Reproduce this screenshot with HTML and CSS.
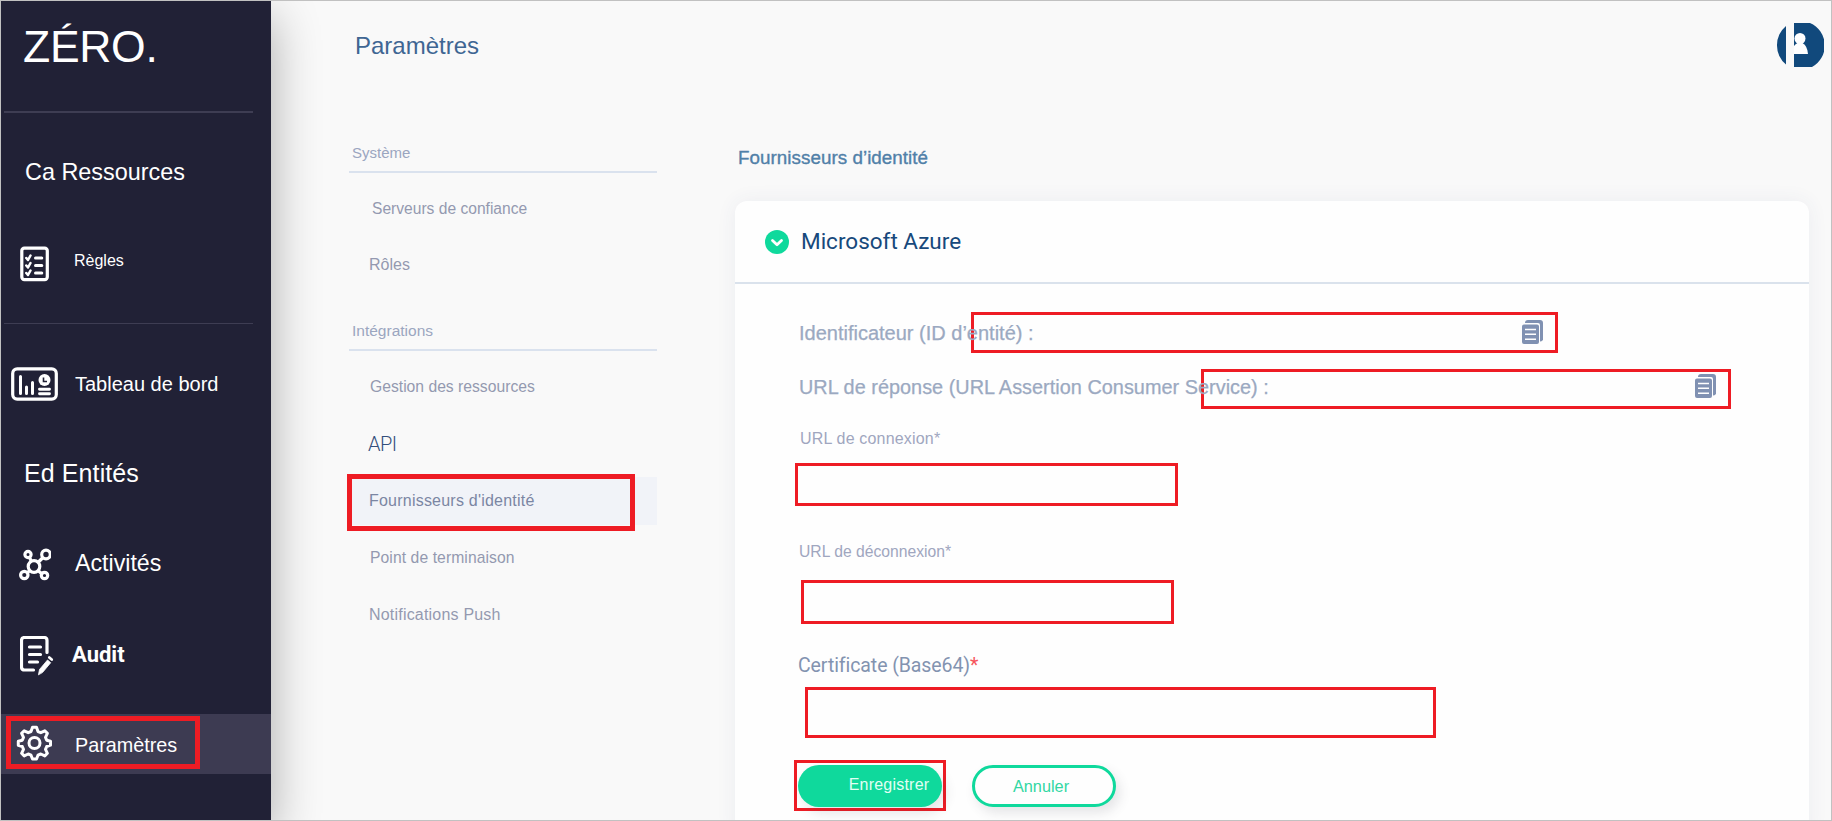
FILE: index.html
```html
<!DOCTYPE html>
<html lang="fr">
<head>
<meta charset="utf-8">
<title>Paramètres</title>
<link rel="stylesheet" href="styles.css">
</head>
<body>
<div class="app">
  <aside class="sidebar">
    <div class="logo">ZÉRO.</div>
    <div class="divider divider-top"></div>
    <div class="nav-item nav-resources"><span class="label">Ca Ressources</span></div>
    <div class="nav-item nav-rules">
      <svg class="icon" width="30" height="36" viewBox="0 0 30 36" fill="none" stroke="#fff" stroke-linecap="round" stroke-linejoin="round"><rect x="1.800" y="2.200" width="25.500" height="31.500" rx="2.600" stroke-width="3.200"/><path d="M6.300 12l1.700 2L10.500 9.500M6.300 19.500l1.700 2L10.500 17M6.300 27l1.700 2L10.500 24.500" stroke-width="2.500"/><path d="M15.500 12h6.300M15.500 19.500h6.300M15.500 27h6.300" stroke-width="3"/></svg>
      <span class="label">Règles</span>
    </div>
    <div class="divider divider-mid"></div>
    <div class="nav-item nav-dashboard">
      <svg class="icon" width="47" height="34" viewBox="0 0 47 34" fill="none" stroke="#fff"><rect x="1.700" y="1.900" width="43.600" height="30.200" rx="4.500" stroke-width="3.200"/><path d="M9.500 9.500v17M15.500 20v6.500M21.500 15.500v11" stroke-width="3" stroke-linecap="round"/><path d="M28.500 22.300h10M28.500 26.700h10" stroke-width="2.900" stroke-linecap="round"/><circle cx="33.500" cy="13" r="6" fill="#fff" stroke="none"/><path d="M32.500 10.500v4h3.500" stroke="#212136" stroke-width="1.600"/></svg>
      <span class="label">Tableau de bord</span>
    </div>
    <div class="nav-item nav-entities"><span class="label">Ed Entités</span></div>
    <div class="nav-item nav-activities">
      <svg class="icon" width="34" height="34" viewBox="0 0 34 34" fill="none" stroke="#fff" stroke-width="3.200"><circle cx="17" cy="18.500" r="5.800"/><circle cx="11" cy="6.500" r="3.100"/><circle cx="29" cy="6.500" r="4.300"/><circle cx="7.300" cy="27" r="3.700"/><circle cx="27.500" cy="27.500" r="3.200"/><path d="M12.500 9.500l2 4M25.500 10l-4 4M13 22.500l-2.500 2M21 22.500l3.500 3"/></svg>
      <span class="label">Activités</span>
    </div>
    <div class="nav-item nav-audit">
      <svg class="icon" width="34" height="40" viewBox="0 0 34 40" fill="none" stroke="#fff" stroke-linecap="round" stroke-linejoin="round"><path d="M13.500 34H4.500q-3 0-3-3V4.500q0-3 3-3h19.500q3 0 3 3v12" stroke-width="3.200"/><path d="M9.500 11h11M9.500 18.500h11M9.500 26h8" stroke-width="3.200"/><path d="M18.500 38.500l1-5 8-9.500 3.200 2.700-8 9.600z" fill="#fff" stroke-width=".8"/><path d="M29.300 21.500l2.400 2" stroke-width="2.800"/></svg>
      <span class="label">Audit</span>
    </div>
    <div class="nav-item nav-settings active">
      <svg class="icon" width="36" height="36" viewBox="0 0 36 36" fill="none" stroke="#fff" stroke-width="3" stroke-linejoin="round"><circle cx="18.500" cy="18" r="5.500"/><path d="M15 6.500L16.500 2.200h4L22 6.500l2.800 1.200L28.800 5.800l2.600 2.600-1.900 4 1.200 2.800L34.500 16.200v4L30.700 21.500l-1.200 2.800 1.900 4-2.600 2.600-4-1.900L22 30.200 20.500 34h-4L15 30.200l-2.800-1.200-4 1.900-2.600-2.600 1.900-4-1.200-2.800L2.300 20.200v-4L6.300 15.200l1.200-2.800-1.900-4 2.600-2.600 4 1.900z"/></svg>
      <span class="label">Paramètres</span>
      <div class="mark mark-nav"></div>
    </div>
  </aside>

  <nav class="subnav">
    <h1 class="page-title">Paramètres</h1>
    <h2 class="group group-system">Système</h2>
    <a class="sub sub-servers">Serveurs de confiance</a>
    <a class="sub sub-roles">Rôles</a>
    <h2 class="group group-integrations">Intégrations</h2>
    <a class="sub sub-resources">Gestion des ressources</a>
    <a class="sub sub-api">API</a>
    <a class="sub sub-identity">Fournisseurs d'identité<span class="mark mark-identity"></span></a>
    <a class="sub sub-endpoint">Point de terminaison</a>
    <a class="sub sub-push">Notifications Push</a>
  </nav>

  <main class="main">
    <header class="topbar">
      <svg class="avatar" width="48" height="44" viewBox="0 0 48 44"><path fill="#11497c" d="M10 3A25 25 0 0 0 10 41.500zM18 0H34A24.500 24.500 0 0 1 36 44H18z"/><circle cx="24" cy="15.500" r="5.500" fill="#fff"/><path fill="#fff" d="M18 31V23q1.500-2 3.500-3h5Q31.500 23 32 31z"/></svg>
    </header>
    <h2 class="section-title">Fournisseurs d’identité</h2>
    <section class="card">
      <div class="card-head">
        <svg class="check" width="24" height="24" viewBox="0 0 24 24"><circle cx="12" cy="12" r="12" fill="#0fd99c"/><path d="M7.500 10.500l4.500 4.300 4.500-4.300" fill="none" stroke="#fff" stroke-width="2.800" stroke-linecap="round" stroke-linejoin="round"/></svg>
        <span class="card-title">Microsoft Azure</span>
      </div>
      <div class="card-body">
        <div class="copy-row row-id">
          <span class="copy-label">Identificateur (ID d’entité) :</span>
          <div class="mark mark-id"><svg class="copy" width="21" height="24" viewBox="0 0 21 24"><path fill="#8091b2" d="M3 3Q3 0 6 0H18Q21 0 21 3V20Q19.500 21.500 18 21.500V5Q18 3 16 3H3zM2 4.500H15Q17 4.500 17 6.500V22Q17 24 15 24H2Q0 24 0 22V6.500Q0 4.500 2 4.500z"/><path stroke="#fff" stroke-width="1.400" d="M3 9.500h11M3 14.300h11M3 19.200h11"/></svg></div>
        </div>
        <div class="copy-row row-reply">
          <span class="copy-label">URL de réponse (URL Assertion Consumer Service) :</span>
          <div class="mark mark-reply"><svg class="copy" width="21" height="24" viewBox="0 0 21 24"><path fill="#8091b2" d="M3 3Q3 0 6 0H18Q21 0 21 3V20Q19.500 21.500 18 21.500V5Q18 3 16 3H3zM2 4.500H15Q17 4.500 17 6.500V22Q17 24 15 24H2Q0 24 0 22V6.500Q0 4.500 2 4.500z"/><path stroke="#fff" stroke-width="1.400" d="M3 9.500h11M3 14.300h11M3 19.200h11"/></svg></div>
        </div>
        <label class="field-label login-label">URL de connexion*</label>
        <div class="field login-field"></div>
        <label class="field-label logout-label">URL de déconnexion*</label>
        <div class="field logout-field"></div>
        <label class="cert-label">Certificate (Base64)<span class="required">*</span></label>
        <div class="field cert-field"></div>
        <div class="actions">
          <div class="save-frame"><button class="btn save">Enregistrer</button></div>
          <button class="btn cancel">Annuler</button>
        </div>
      </div>
    </section>
  </main>
</div>
</body>
</html>
```
FILE: styles.css
```css
* { box-sizing: border-box; }
body { margin: 0; font-family: "Liberation Sans", Arial, sans-serif; background: #f9f9f9; }
h1, h2 { margin: 0; font-weight: 400; }
.app { display: flex; width: 1832px; height: 821px; border: 1px solid #c1c1c1; overflow: hidden; background: #f9f9f9; }

.sidebar { position: relative; flex: none; width: 270px; display: flex; flex-direction: column; background: #212136; color: #fff; box-shadow: 0 16px 46px rgba(0, 0, 0, .32); white-space: nowrap; }
.logo { margin: 21px 0 0 22px; height: 50px; line-height: 49px; font-size: 44.5px; letter-spacing: -.3px; }
.divider { width: 249px; margin-left: 3px; background: #3e3d53; }
.divider-top { margin-top: 39px; height: 2px; }
.divider-mid { margin-top: 42px; height: 1px; }
.nav-item { position: relative; display: flex; align-items: center; height: 40px; }
.icon { flex: none; }
.nav-resources { margin-top: 39px; padding-left: 24px; font-size: 23.4px; }
.nav-rules { margin-top: 49px; padding-left: 19px; gap: 24px; font-size: 16px; }
.nav-rules .icon { margin-top: 5px; }
.nav-dashboard { margin-top: 40px; padding-left: 10px; gap: 17px; font-size: 20px; }
.nav-entities { margin-top: 49px; padding-left: 23px; font-size: 25px; letter-spacing: .1px; }
.nav-entities .label { padding-top: 1px; }
.nav-activities { margin-top: 50px; padding-left: 16px; gap: 24px; font-size: 23.2px; }
.nav-activities .icon { margin-top: 3px; }
.nav-audit { margin-top: 50px; padding-left: 19px; gap: 18px; font: 700 22px Roboto, sans-serif; }
.nav-audit .icon { margin-top: 5px; }
.nav-audit .label { padding-top: 2px; }
.nav-settings { margin-top: 41px; padding-left: 15px; gap: 23px; height: 60px; font-size: 19.8px; }
.nav-settings .label { padding-top: 2px; }
.nav-settings .icon { margin-top: -2px; }
.active { background: #3d3b52; }
.mark { position: absolute; display: flex; justify-content: flex-end; border: 3px solid #ee1c24; }
.mark-nav { left: 5px; top: 2px; width: 194px; height: 53px; border-width: 5px; }

.subnav { flex: none; width: 308px; margin-left: 78px; display: flex; flex-direction: column; white-space: nowrap; }
.page-title { margin: 25px 0 0 6px; height: 40px; line-height: 40px; font-size: 24px; color: #3f6693; }
.group { padding-left: 3px; height: 39px; line-height: 38px; font-size: 15px; color: #9ba6c0; border-bottom: 2px solid #dae2ee; }
.group-system { margin-top: 68px; }
.group-integrations { margin-top: 27px; font-size: 15.5px; }
.sub { position: relative; height: 40px; line-height: 40px; padding-left: 21px; font-size: 15.7px; color: #9499b0; }
.sub-servers { margin-top: 16px; padding-left: 23px; font-size: 15.6px; }
.sub-roles { margin-top: 16px; padding-left: 20px; font-size: 16px; }
.sub-resources { margin-top: 16px; }
.sub-api { margin-top: 17px; padding-left: 19px; font: 300 20px/40px Roboto, sans-serif; color: #334e7b; letter-spacing: -.5px; }
.sub-identity { margin-top: 13px; height: 48px; line-height: 47px; padding-left: 20px; font-size: 16px; letter-spacing: .22px; color: #7b86a3; background: #f1f3f8; }
.mark-identity { left: -2px; top: -3px; width: 288px; height: 57px; border-width: 5px; }
.sub-endpoint { margin-top: 13px; letter-spacing: .08px; }
.sub-push { margin-top: 17px; padding-left: 20px; font-size: 16px; letter-spacing: .2px; }

.main { flex: none; width: 1174px; margin-left: 78px; }
.topbar { display: flex; justify-content: flex-end; height: 137px; padding: 22px 7px 0 0; width: 1096px; }
.avatar { flex: none; }
.section-title { height: 40px; line-height: 40px; padding-left: 3px; font-size: 18.8px; letter-spacing: .05px; color: #5080a8; -webkit-text-stroke: .35px #5080a8; }
.card { width: 1074px; height: 640px; margin-top: 23px; border-radius: 12px; background: #fefefe; box-shadow: 0 0 20px rgba(50, 70, 130, .07); }
.card-head { display: flex; align-items: center; gap: 12px; height: 83px; padding-left: 30px; border-bottom: 2px solid #dae2ec; }
.card-title { padding-bottom: 2px; font: 400 22.5px Roboto, sans-serif; color: #17497c; }
.card-body { display: flex; flex-direction: column; align-items: flex-start; padding: 28px 0 0 60px; white-space: nowrap; }
.copy-row { position: relative; width: 940px; height: 41px; line-height: 42px; font-size: 20px; color: #9ba9c1; }
.copy-label { position: relative; z-index: 1; padding-left: 4px; -webkit-text-stroke: .25px #9ba9c1; }
.mark-id { left: 176px; top: 0; width: 587px; height: 41px; padding: 5px 12px 0 0; }
.row-reply { margin-top: 16px; height: 40px; line-height: 36px; font-size: 19.85px; letter-spacing: .03px; }
.mark-reply { left: 406px; top: 0; width: 530px; height: 40px; padding: 2px 12px 0 0; }
.copy { flex: none; }
.field-label { height: 24px; line-height: 24px; font-size: 16px; color: #a0a6bf; }
.login-label { margin: 18px 0 0 5px; letter-spacing: .18px; }
.field { border: 3px solid #ee1c24; }
.login-field { width: 383px; height: 43px; margin-top: 12px; }
.logout-label { margin: 34px 0 0 4px; font-size: 15.7px; }
.logout-field { width: 373px; height: 44px; margin: 16px 0 0 6px; }
.cert-label { height: 30px; margin: 27px 0 0 3px; font: 400 19.5px/30px Roboto, sans-serif; letter-spacing: -.08px; color: #8393b0; }
.required { color: #f6555c; }
.cert-field { width: 631px; height: 51px; margin: 6px 0 0 10px; }
.actions { display: flex; align-items: center; gap: 26px; margin: 22px 0 0 -1px; height: 51px; }
.save-frame { width: 152px; height: 51px; border: 3px solid #ee1c24; padding: 2px 1px; }
.btn { display: block; width: 144px; height: 42px; padding: 0; border: 0; border-radius: 21px; font: 16px/36px "Liberation Sans", Arial, sans-serif; white-space: nowrap; box-shadow: 4px 6px 12px rgba(60, 60, 80, .13); }
.save { padding: 0 0 2px 38px; letter-spacing: .22px; background: #0fd99c; color: #e2fff4; }
.cancel { border: 3px solid #0fd99c; background: #fefefe; color: #32d7a3; padding: 0 6px 2px 0; font-size: 16.3px; }
```
